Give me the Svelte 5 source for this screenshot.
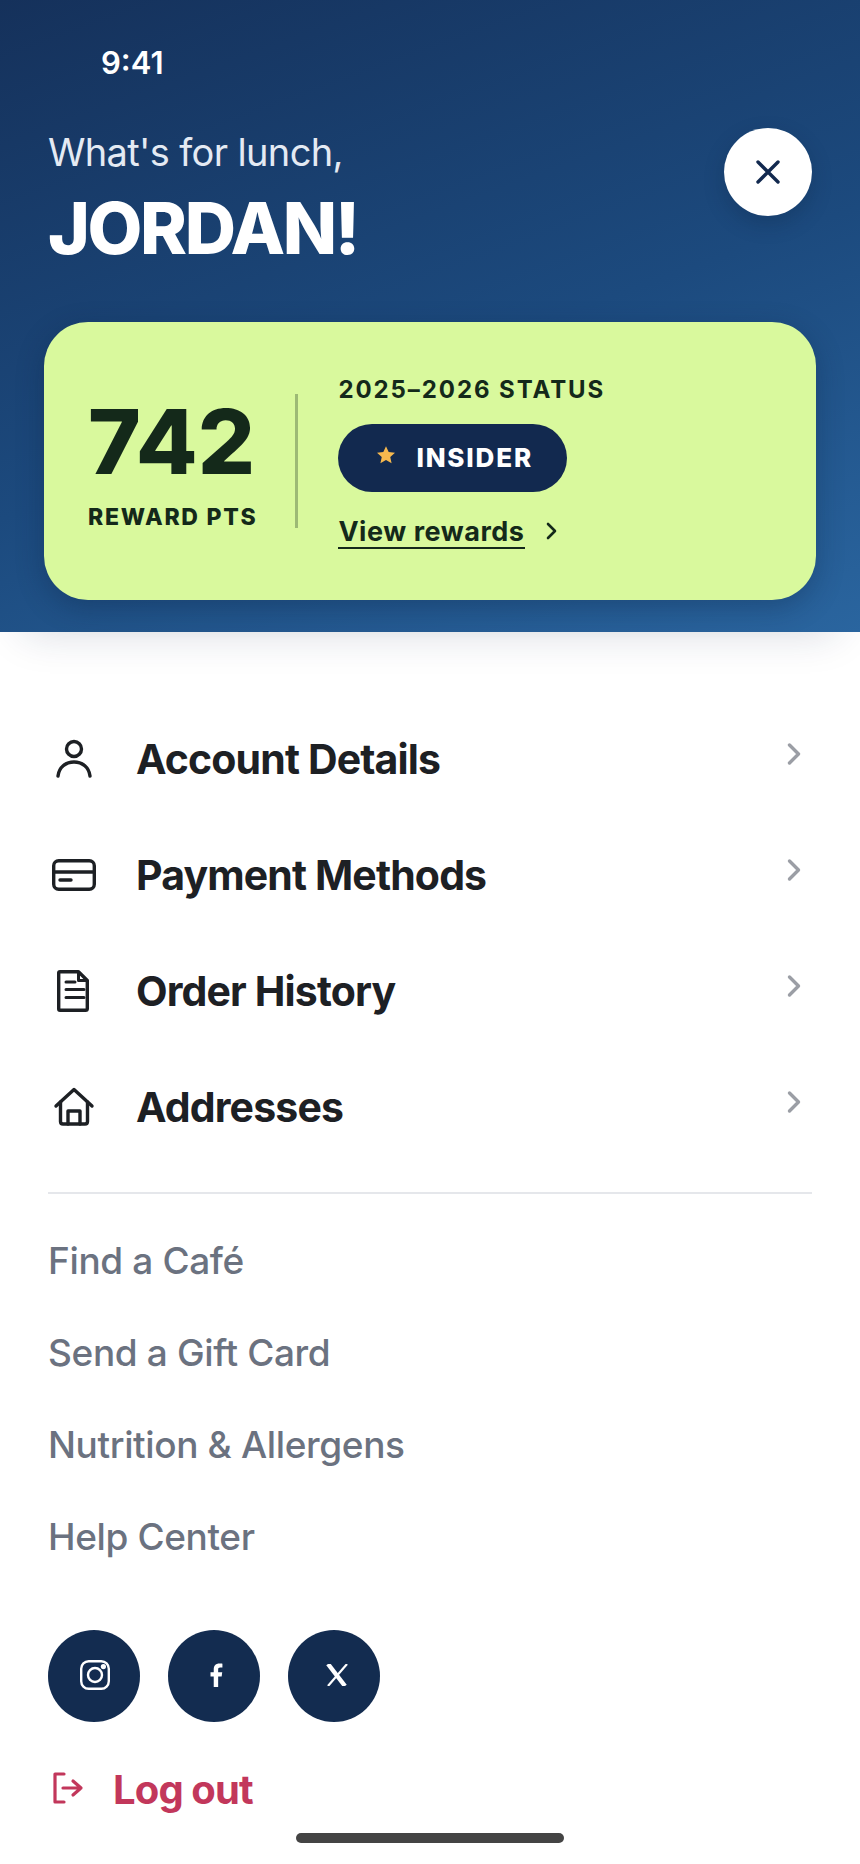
<script lang="ts">
	const mainLinks = [
		{ label: 'Account Details', icon: 'user' },
		{ label: 'Payment Methods', icon: 'card' },
		{ label: 'Order History', icon: 'doc' },
		{ label: 'Addresses', icon: 'home' }
	]
	const subLinks = ['Find a Café', 'Send a Gift Card', 'Nutrition & Allergens', 'Help Center']
</script>

<div class="screen">
	<header class="hero">
		<div class="time">9:41</div>
		<div class="greeting">
			<div>
				<div class="hello">What's for lunch,</div>
				<div class="name">JORDAN!</div>
			</div>
			<button class="close" aria-label="Close">
				<svg width="30" height="30" viewBox="0 0 30 30" fill="none" stroke="#12294f" stroke-width="3.4" stroke-linecap="round">
					<path d="M5 5 L25 25 M25 5 L5 25" />
				</svg>
			</button>
		</div>

		<section class="card">
			<div class="points">
				<div class="num">742</div>
				<div class="pts">REWARD PTS</div>
			</div>
			<div class="rule"></div>
			<div class="status">
				<div class="year">2025–2026 STATUS</div>
				<div class="pill">
					<svg class="star" width="20" height="20" viewBox="0 0 24 24" fill="#f6b84e">
						<path d="M12 1.5l3.2 7 7.6.8-5.7 5.1 1.6 7.5-6.7-3.8-6.7 3.8 1.6-7.5L1.2 9.3l7.6-.8z" />
					</svg>
					<span>INSIDER</span>
				</div>
				<div class="view">
					<span class="view-label">View rewards</span>
					<svg class="view-chev" width="14" height="20" viewBox="0 0 14 20" fill="none" stroke="#14291a" stroke-width="2.6" stroke-linecap="round" stroke-linejoin="round">
						<path d="M3 3 L10 10 L3 17" />
					</svg>
				</div>
			</div>
		</section>
	</header>

	<nav class="main-nav">
		{#each mainLinks as link}
			<div class="main-row">
				<span class="main-icon">
					<svg width="46" height="46" viewBox="0 0 46 46" fill="none" stroke="#1d2024" stroke-width="3.4" stroke-linecap="round" stroke-linejoin="round">
						{#if link.icon === 'user'}
							<circle cx="23" cy="13" r="7.5" />
							<path d="M7 40 C8 31.5 14.5 26 23 26 C31.5 26 38 31.5 39 40" />
						{:else if link.icon === 'card'}
							<rect x="2.7" y="8.7" width="40.6" height="28.6" rx="5" />
							<path d="M2.7 20 H43.3 M9 28 H20" />
						{:else if link.icon === 'doc'}
							<path d="M9 3.7 H27.5 L36.3 12.5 V40.5 Q36.3 42.3 34.5 42.3 H9 Q7.7 42.3 7.7 41 V5 Q7.7 3.7 9 3.7 Z" />
							<path d="M27.5 4.5 V12.5 H35.5 M15 14 H24 M15 21.5 H33 M15 29.5 H33" stroke-width="3" />
						{:else}
							<path d="M5 22 L23 5.5 L41 22" />
							<path d="M9.5 18 V37.5 Q9.5 40 12 40 H34 Q36.5 40 36.5 37.5 V18" />
							<path d="M17 40 V27 H29 V40" />
						{/if}
					</svg>
				</span>
				<span class="main-label">{link.label}</span>
				<svg class="row-chev" width="14" height="24" viewBox="0 0 14 24" fill="none" stroke="#9b9ea5" stroke-width="3.4" stroke-linecap="round" stroke-linejoin="round">
					<path d="M2.5 3 L11.5 12 L2.5 21" />
				</svg>
			</div>
		{/each}
	</nav>

	<div class="divider"></div>

	<nav class="sub-nav">
		{#each subLinks as link}
			<div class="sub-row">{link}</div>
		{/each}
	</nav>

	<div class="socials">
		<span class="social">
			<svg class="ig" width="30" height="30" viewBox="0 0 30 30" fill="none" stroke="#fff" stroke-width="2.4">
				<rect x="1.2" y="1.2" width="27.6" height="27.6" rx="7.5" />
				<circle cx="15" cy="15" r="7" />
				<circle cx="23.4" cy="6.6" r="2.6" fill="#fff" stroke="none" />
			</svg>
		</span>
		<span class="social">
			<svg class="fb" width="13" height="24" viewBox="0 0 14 26" fill="#fff">
				<path d="M4 26 V14.5 H0.5 V10 H4 V6.8 C4 2.8 6.4 0.5 10 0.5 C11.5 0.5 12.8 0.6 13.4 0.7 V5 H11 C9.2 5 8.8 5.9 8.8 7.2 V10 H13.2 L12.6 14.5 H8.8 V26 Z" />
			</svg>
		</span>
		<span class="social">
			<svg class="xi" width="24" height="22" viewBox="0 0 24 22" fill="none" stroke="#fff" stroke-linecap="butt">
				<path d="M3 0 L20 22" stroke-width="4.4" />
				<path d="M22 0 L3 22" stroke-width="2.2" />
			</svg>
		</span>
	</div>

	<div class="logout">
		<svg width="32" height="32" viewBox="0 0 32 32" fill="none" stroke="#c2375b" stroke-width="3.2" stroke-linecap="round" stroke-linejoin="round">
			<path d="M12 2 H3 V30 H12" />
			<path d="M11 16 H29 M21 9 L29 16 L21 23" />
		</svg>
		<span>Log out</span>
	</div>

	<div class="home-bar"></div>
</div>

<style>
	:global(body) {
		background: #fff;
	}

	.screen {
		width: 860px;
		height: 1864px;
		overflow: hidden;
		background: #fff;
		font-family: Inter, 'Liberation Sans', sans-serif;
		color: #1d2024;
	}

	.hero {
		height: 632px;
		box-sizing: border-box;
		padding: 46px 44px 0;
		background: linear-gradient(160deg, #15315b 0%, #1c4a7e 55%, #2a659f 100%);
		box-shadow: 0 24px 40px -24px rgba(20, 40, 80, 0.18);
		position: relative;
	}

	.time {
		margin-left: 57px;
		font-size: 31px;
		line-height: 34px;
		font-weight: 600;
		color: #fff;
	}

	.greeting {
		display: flex;
		justify-content: space-between;
		align-items: flex-start;
		padding: 48px 4px 0;
	}

	.hello {
		padding-top: 1px;
		font-size: 38px;
		line-height: 46px;
		font-weight: 400;
		letter-spacing: -0.017em;
		color: #e4eaf3;
	}

	.name {
		margin-top: 11px;
		font-size: 71px;
		line-height: 84px;
		font-weight: 800;
		letter-spacing: -0.033em;
		color: #fff;
	}

	.close {
		width: 88px;
		height: 88px;
		padding: 0;
		border: none;
		border-radius: 50%;
		background: #fff;
		display: grid;
		place-content: center;
		box-shadow: 0 8px 20px rgba(10, 30, 60, 0.25);
	}

	.close svg {
		display: block;
	}

	.card {
		margin-top: 52px;
		height: 278px;
		box-sizing: border-box;
		padding: 0 44px;
		display: flex;
		align-items: center;
		border-radius: 44px;
		background: #d9f99d;
		color: #14291a;
		box-shadow: 0 8px 28px rgba(10, 30, 60, 0.3);
	}

	.points {
		margin-top: 4px;
	}

	.num {
		font-size: 90px;
		line-height: 90px;
		font-weight: 800;
	}

	.pts {
		margin-top: 17px;
		font-size: 23px;
		line-height: 26px;
		font-weight: 800;
		letter-spacing: 0.075em;
	}

	.rule {
		width: 3px;
		height: 134px;
		margin: 0 40px 0 38px;
		background: rgba(20, 41, 26, 0.3);
	}

	.status {
		margin-top: 2px;
	}

	.year {
		font-size: 24px;
		line-height: 28px;
		font-weight: 700;
		letter-spacing: 0.08em;
	}

	.pill {
		margin-top: 20px;
		width: 229px;
		height: 68px;
		box-sizing: border-box;
		padding-left: 38px;
		display: flex;
		align-items: center;
		gap: 20px;
		border-radius: 34px;
		background: #12294f;
		color: #fff;
		font-size: 26px;
		font-weight: 800;
		letter-spacing: 0.07em;
	}

	.star {
		margin-top: -5px;
	}

	.view {
		margin-top: 25px;
		display: flex;
		align-items: center;
		gap: 20px;
	}

	.view-label {
		font-size: 27px;
		line-height: 30px;
		font-weight: 700;
		letter-spacing: 0.02em;
		border-bottom: 2px solid #14291a;
	}

	.view-chev {
		margin-top: -4px;
	}

	.main-nav {
		padding: 69px 48px 0;
	}

	.main-row {
		height: 116px;
		display: flex;
		align-items: center;
	}

	.main-icon {
		width: 46px;
		height: 46px;
		margin: 0 39px 0 3px;
		display: block;
	}

	.main-icon svg {
		display: block;
	}

	.main-label {
		flex: 1;
		font-size: 41px;
		font-weight: 700;
		letter-spacing: -0.021em;
	}

	.row-chev {
		margin: -11px 11px 0 0;
	}

	.divider {
		height: 2px;
		margin: 27px 48px 0;
		background: #e5e7eb;
	}

	.sub-nav {
		padding: 20px 48px 0;
	}

	.sub-row {
		height: 92px;
		display: flex;
		align-items: center;
		font-size: 37px;
		font-weight: 500;
		letter-spacing: -0.01em;
		color: #6b7280;
	}

	.socials {
		display: flex;
		gap: 28px;
		padding: 48px 48px 0;
	}

	.social {
		width: 92px;
		height: 92px;
		border-radius: 50%;
		background: #132c50;
		display: grid;
		place-content: center;
	}

	.social svg {
		display: block;
	}

	.ig {
		margin: -3px 0 0 2px;
	}

	.fb {
		margin: -2px 0 0 4px;
	}

	.xi {
		margin: -3px 0 0 6px;
	}

	.logout {
		margin-top: 44px;
		padding-left: 52px;
		display: flex;
		align-items: center;
		gap: 29px;
		font-size: 40px;
		line-height: 48px;
		font-weight: 700;
		letter-spacing: -0.022em;
		color: #c2375b;
	}

	.logout svg {
		margin-top: -4px;
	}

	.home-bar {
		width: 268px;
		height: 10px;
		margin: 19px auto 0;
		border-radius: 5px;
		background: #444;
	}
</style>
